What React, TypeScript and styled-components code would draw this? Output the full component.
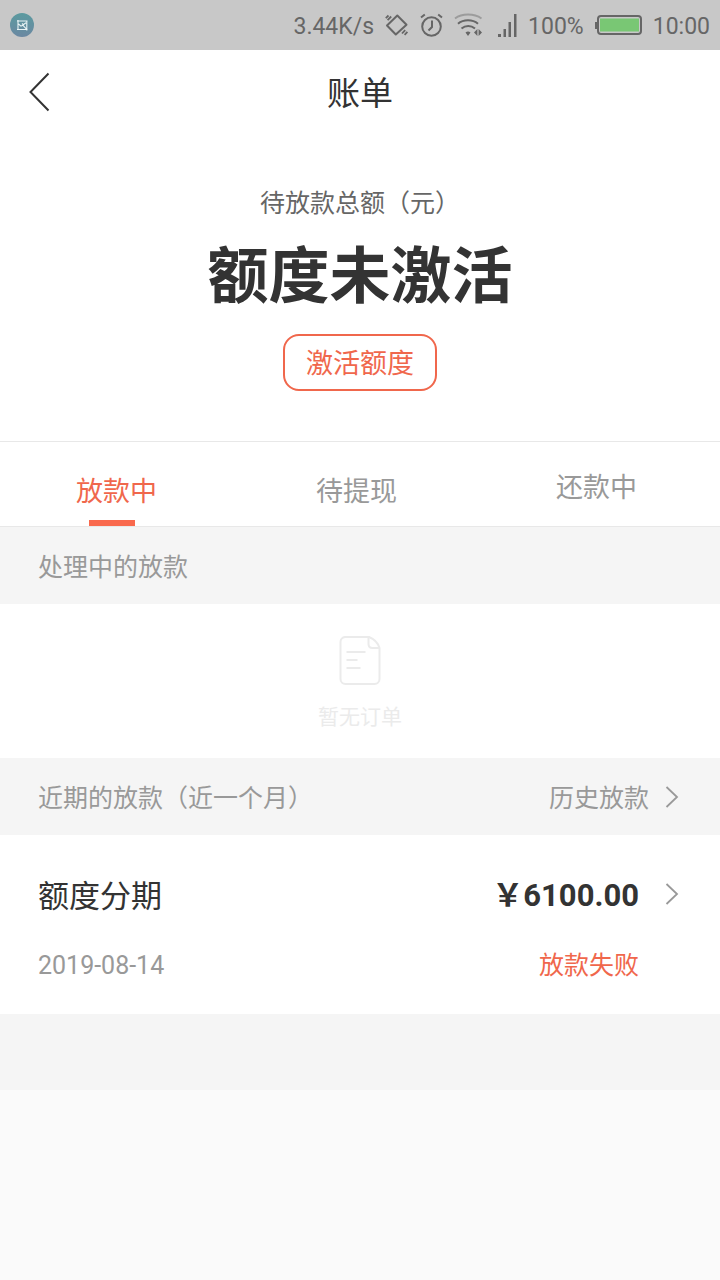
import React from "react";
import styled, { createGlobalStyle } from "styled-components";

const accent = "#f0674c";

const GlobalStyle = createGlobalStyle`
  * { box-sizing: border-box; }
  body {
    margin: 0;
    background: #fafafa;
    color: #333;
    font-family: Roboto, "Noto Sans CJK SC", sans-serif;
  }
  button { font: inherit; cursor: pointer; }
  h1, h2, p { margin: 0; font-weight: 400; }
`;

const StatusBar = styled.div`
  display: flex;
  align-items: center;
  height: 50px;
  padding: 0 10px;
  background: #c8c8c8;
  color: #666;
  font-size: 23px;
  line-height: 32px;
  svg { display: block; flex: none; }
`;

const StatusGroup = styled.div`
  display: flex;
  align-items: center;
  gap: 11px;
  margin-left: auto;
`;

const StatusText = styled.span`
  padding-top: 4px;
`;

const NavBar = styled.header`
  display: grid;
  grid-template-columns: 80px 1fr 80px;
  align-items: center;
  height: 84px;
  background: #fff;
`;

const BackButton = styled.button`
  justify-self: start;
  display: flex;
  padding: 0 0 0 28px;
  border: 0;
  background: none;
  color: #333;
`;

const Title = styled.h1`
  padding-top: 4px;
  text-align: center;
  font-size: 33px;
  line-height: 48px;
`;

const Summary = styled.section`
  display: flex;
  flex-direction: column;
  align-items: center;
  padding: 52px 20px 50px;
  background: #fff;
`;

const SummaryLabel = styled.p`
  color: #666;
  font-size: 25px;
  line-height: 36px;
`;

const SummaryValue = styled.p`
  margin-top: 10px;
  font-size: 61px;
  font-weight: 700;
  line-height: 90px;
`;

const ActivateButton = styled.button`
  margin-top: 12px;
  padding: 8px 21px 4px;
  border: 2px solid ${accent};
  border-radius: 16px;
  background: #fff;
  color: ${accent};
  && { font-size: 27px; line-height: 41px; }
`;

const Tabs = styled.nav`
  display: grid;
  grid-template-columns: repeat(3, 1fr);
  border-top: 1px solid #e8e8e8;
  border-bottom: 1px solid #e8e8e8;
  background: #fff;
`;

const Tab = styled.button<{ $active?: boolean; $raised?: boolean }>`
  position: relative;
  height: 84px;
  padding: ${(p) => (p.$raised ? "8px 7px 0 0" : "16px 7px 0 0")};
  border: 0;
  background: none;
  color: ${(p) => (p.$active ? accent : "#999")};
  && { font-size: 27px; line-height: 40px; }
  &::after {
    content: "";
    display: ${(p) => (p.$active ? "block" : "none")};
    position: absolute;
    bottom: 0;
    left: 37%;
    width: 46px;
    height: 6px;
    background: #f9694d;
  }
`;

const SectionBar = styled.div`
  display: flex;
  align-items: center;
  justify-content: space-between;
  height: 77px;
  padding: 0 41px 0 38px;
  background: #f5f5f5;
  color: #999;
`;

const SectionTitle = styled.h2`
  padding-top: 4px;
  font-size: 25px;
  line-height: 36px;
`;

const HistoryLink = styled.a`
  display: flex;
  align-items: center;
  gap: 16px;
  color: #999;
  font-size: 25px;
  line-height: 36px;
  text-decoration: none;
`;

const LinkText = styled.span`
  padding-top: 4px;
`;

const EmptyState = styled.div`
  display: flex;
  flex-direction: column;
  align-items: center;
  gap: 16px;
  padding: 31px 0 25px;
  background: #fff;
  color: #ebebeb;
  font-size: 21px;
  line-height: 32px;
`;

const LoanCard = styled.a`
  display: block;
  padding: 35px 41px 30px 38px;
  background: #fff;
  color: #333;
  text-decoration: none;
`;

const LoanRow = styled.div<{ $minor?: boolean }>`
  display: flex;
  align-items: center;
  justify-content: space-between;
  margin-top: ${(p) => (p.$minor ? "30px" : "0")};
  padding-right: ${(p) => (p.$minor ? "40px" : "0")};
  font-size: ${(p) => (p.$minor ? "25px" : "31px")};
  line-height: ${(p) => (p.$minor ? "36px" : "42px")};
`;

const LoanName = styled.span`
  padding-top: 6px;
`;

const AmountGroup = styled.div`
  display: flex;
  align-items: center;
  gap: 26px;
  color: #999;
`;

const Amount = styled.strong`
  padding-top: 4px;
  color: #333;
  font-weight: 700;
`;

const LoanDate = styled.time`
  color: #999;
`;

const LoanState = styled.span`
  color: ${accent};
`;

const PageFoot = styled.footer`
  height: 76px;
  background: #f5f5f5;
`;

const Chevron = () => (
  <svg width="14" height="24" viewBox="0 0 14 24" fill="none" stroke="currentColor" strokeWidth="1.800" aria-hidden="true">
    <path d="M1.500 2 12 12 1.500 22" />
  </svg>
);

const GalleryBadge = () => (
  <svg width="24" height="24" viewBox="0 0 24 24" fill="none" aria-hidden="true">
    <defs>
      <linearGradient id="badge" x1="0" y1="0" x2="0" y2="1">
        <stop offset="0" stopColor="#5b9a9f" />
        <stop offset="1" stopColor="#6b88a2" />
      </linearGradient>
    </defs>
    <circle cx="12" cy="12" r="12" fill="url(#badge)" />
    <path d="M7 8h10.500M8 7v10M7 16.500h10.500M16.800 8v9.500M8.500 11l2.500 2.200 1.800-1 3.700 4M12 10.500l1.300 1.200 2.700-2" stroke="#e9f4f5" strokeWidth="1.100" />
  </svg>
);

const VibrateIcon = () => (
  <svg width="24" height="24" viewBox="0 0 24 24" fill="none" stroke="currentColor" strokeWidth="2" aria-hidden="true">
    <path d="M12.300 2.500 21.500 11.700 10.800 21.500 2 12.500Z" strokeLinejoin="round" />
    <path d="M.8 5.200 3.500 2.500M2.600 7.200 6.200 3.500M17 20.500l3.200-3.400M19.600 21.800l2.800-3" strokeWidth="1.800" />
  </svg>
);

const AlarmIcon = () => (
  <svg width="23" height="24" viewBox="0 0 23 24" fill="none" stroke="currentColor" strokeWidth="2" aria-hidden="true">
    <circle cx="11.500" cy="13.500" r="9.300" />
    <path d="M12 7.500v6.500l-3.500 3.500M1 4.500 4.800 1.500M18.200 1.500 22 4.500" />
  </svg>
);

const WifiIcon = () => (
  <svg width="33" height="24" viewBox="0 0 33 24" fill="none" stroke="currentColor" strokeWidth="2" aria-hidden="true">
    <path d="M1 5.500C8 .3 20 .3 27.500 5.500" opacity="0.450" />
    <path d="M4 10.800c5.500-4.600 14.500-4.600 20 0M7.500 15.500c4-3.400 9.500-3.400 13.500 0" />
    <path d="M11.500 19.500q2.500-2 5 0L14 23ZM23.400 16v7l-3.400-3.500ZM24.600 16v7l3.400-3.500Z" fill="currentColor" stroke="none" />
  </svg>
);

const SignalIcon = () => (
  <svg width="19" height="23" viewBox="0 0 19 23" fill="currentColor" aria-hidden="true">
    <path d="M0 20h3v3H0zM5.500 15h2.500v8H5.500zM10.500 8H13v15h-2.500zM16 0h2.500v23H16z" />
  </svg>
);

const BatteryIcon = () => (
  <svg width="47" height="20" viewBox="0 0 47 20" fill="none" aria-hidden="true">
    <path d="M0 7h2v7H0z" fill="#666" />
    <rect x="3" y="1" width="43" height="18" rx="3" stroke="#666" strokeWidth="2" />
    <rect x="5" y="3.500" width="39" height="13" fill="#79c774" />
  </svg>
);

const EmptyDocIcon = () => (
  <svg width="42" height="50" viewBox="0 0 42 50" fill="none" stroke="currentColor" strokeWidth="2" aria-hidden="true">
    <path d="M6 2h24q8 3 10.500 11v31a5 5 0 0 1-5 5H6.500a5 5 0 0 1-5-5V7A5 5 0 0 1 6 2Z" />
    <path d="M29.500 2v7q0 4 4 4h7M7.500 17h19M7.500 25h11M7.500 33h14" />
  </svg>
);

export default function App() {
  return (
    <>
      <GlobalStyle />
      <StatusBar>
        <GalleryBadge />
        <StatusGroup>
          <StatusText>3.44K/s</StatusText>
          <VibrateIcon />
          <AlarmIcon />
          <WifiIcon />
          <SignalIcon />
          <StatusText>100%</StatusText>
          <BatteryIcon />
          <StatusText>10:00</StatusText>
        </StatusGroup>
      </StatusBar>
      <NavBar>
        <BackButton type="button" aria-label="返回">
          <svg width="22" height="40" viewBox="0 0 22 40" fill="none" stroke="currentColor" strokeWidth="2" aria-hidden="true">
            <path d="M20.500 1.500 2.500 20l18 18.500" />
          </svg>
        </BackButton>
        <Title>账单</Title>
      </NavBar>
      <main>
        <Summary>
          <SummaryLabel>待放款总额（元）</SummaryLabel>
          <SummaryValue>额度未激活</SummaryValue>
          <ActivateButton type="button">激活额度</ActivateButton>
        </Summary>
        <Tabs>
          <Tab type="button" $active>放款中</Tab>
          <Tab type="button">待提现</Tab>
          <Tab type="button" $raised>还款中</Tab>
        </Tabs>
        <SectionBar>
          <SectionTitle>处理中的放款</SectionTitle>
        </SectionBar>
        <EmptyState>
          <EmptyDocIcon />
          <p>暂无订单</p>
        </EmptyState>
        <SectionBar>
          <SectionTitle>近期的放款（近一个月）</SectionTitle>
          <HistoryLink href="#history">
            <LinkText>历史放款</LinkText>
            <Chevron />
          </HistoryLink>
        </SectionBar>
        <LoanCard href="#loan">
          <LoanRow>
            <LoanName>额度分期</LoanName>
            <AmountGroup>
              <Amount>￥6100.00</Amount>
              <Chevron />
            </AmountGroup>
          </LoanRow>
          <LoanRow $minor>
            <LoanDate dateTime="2019-08-14">2019-08-14</LoanDate>
            <LoanState>放款失败</LoanState>
          </LoanRow>
        </LoanCard>
      </main>
      <PageFoot />
    </>
  );
}
